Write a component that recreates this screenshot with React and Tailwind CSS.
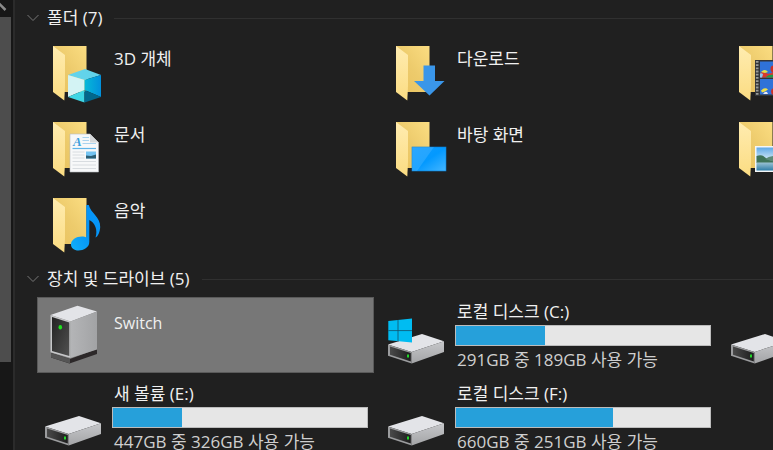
const folders = [
  { name: '3D 개체', Badge: CubeBadge },
  { name: '다운로드', Badge: DownloadBadge },
  { name: '', Badge: VideoBadge },
  { name: '문서', Badge: DocumentBadge },
  { name: '바탕 화면', Badge: DesktopBadge },
  { name: '', Badge: PictureBadge },
  { name: '음악', Badge: MusicBadge },
];

const drives = [
  { name: 'Switch', device: true, selected: true },
  { name: '로컬 디스크 (C:)', total: 291, free: 189, system: true },
  { name: '' },
  { name: '새 볼륨 (E:)', total: 447, free: 326 },
  { name: '로컬 디스크 (F:)', total: 660, free: 251 },
];

function CubeBadge() {
  return (
    <>
      <path d="M23 35 40 29 56 35 39.500 40z" fill="#62d3ea" />
      <path d="M23 35 39.500 40V50L23 57z" fill="#d3f3f4" />
      <path d="M23 57 39.500 50V62.500z" fill="#3fd6e4" />
      <path d="M39.500 40 56 35V57L39.500 50z" fill="url(#cubeSide)" />
      <path d="M39.500 50 56 57 39.500 62.500z" fill="#02678c" />
    </>
  );
}

function DownloadBadge() {
  return <path d="M35.500 25.500H47V41H56.500L41.500 55.500 26 41H35.500z" fill="#3a96e9" />;
}

function VideoBadge() {
  return (
    <>
      <rect x="24" y="20" width="36" height="36" fill="#333538" />
      <path d="M26.200 21V55" stroke="#9a9c98" strokeWidth="2.600" strokeDasharray="1.800 1.400" />
      <rect x="29" y="21.500" width="30" height="16" fill="#2f72d8" />
      <rect x="29" y="39" width="30" height="15.500" fill="#2f72d8" />
      <path d="M29 33q3-2 6 0t7-1v5.500H29z" fill="#d8392e" />
      <path d="M30 32q4-4 7 0l-3 1z" fill="#e8dd4a" />
      <path d="M29 33.500q2-1 3 1l-1 3h-2z" fill="#8ec8f0" />
      <circle cx="43" cy="29" r="3.500" fill="#cf3024" />
      <path d="M35 37q3-3 8-2v2.500h-8z" fill="#1f9b46" />
      <path d="M30 50.500q4-4 7-1l-3 2-3 1z" fill="#efe04b" />
      <path d="M32 54q2-3 4-2l1 2z" fill="#e8e9f2" />
      <circle cx="43.500" cy="51.500" r="3.500" fill="#cf3024" />
    </>
  );
}

function DocumentBadge() {
  return (
    <>
      <path d="M25 18H45L53.500 26.500V56H25z" fill="#f7f8f9" stroke="#b9bcbf" strokeWidth="0.600" />
      <path d="M45 18V26.500H53.500z" fill="#d5d8da" />
      <text x="28" y="30" fontFamily="Liberation Serif, serif" fontStyle="italic" fontWeight="700" fontSize="13" fill="#3d9fdb">A</text>
      <path d="M37.500 21.500H44M37.500 24.500H44M37.500 27.500H51" stroke="#a9d3ee" />
      <path d="M27.500 32.500H51" stroke="#5fb4e8" strokeWidth="1.200" />
      <path d="M27.500 36H39.500M27.500 39H39.500M27.500 42H39.500M27.500 45.500H51M27.500 49H51M27.500 52.500H51" stroke="#d8dce0" />
      <rect x="41" y="35.500" width="10" height="7" fill="#74c4f2" />
      <path d="M41 39.500 46 40 51 38.500V42.500H41z" fill="#2c5e74" />
    </>
  );
}

function DesktopBadge() {
  return (
    <>
      <rect x="24" y="31" width="34" height="24" fill="url(#desktop)" stroke="#0a7fd4" strokeWidth="0.600" />
      <path d="M24 31H46L29 55H24z" fill="#fff" fillOpacity="0.120" />
    </>
  );
}

function PictureBadge() {
  return (
    <>
      <rect x="24" y="30" width="36" height="26" fill="#f4f6f7" />
      <rect x="25.500" y="31.500" width="33" height="23" fill="url(#sky)" />
      <path d="M25.500 40q5-2 8 1t9 4v2H25.500z" fill="#3f7358" />
      <path d="M34 43q4-3 10-3v6z" fill="#5c8a78" />
      <path d="M25.500 46.500H58.500V54.500H25.500z" fill="url(#lake)" />
    </>
  );
}

function MusicBadge() {
  return (
    <path
      d="M41.300 13H43.800C45.500 21 55.500 25 55.200 35 55 40 53 44.500 50.500 45.500 53 38 50 30.500 44.300 28V50C44.300 55.500 38.500 58.500 33.500 58.500 29 58.500 26 56 26 52.500 26 48 31 44.500 37 44.500 38.700 44.500 40.300 44.900 41.300 45.500z"
      fill="url(#note)"
    />
  );
}

function FolderIcon({ Badge }) {
  return (
    <svg viewBox="0 0 64 64" className="size-16 shrink-0" aria-hidden="true">
      <path d="M8 6H41.500V52H8z" fill="url(#folderBack)" />
      <path d="M8 6 20 15V46L19.300 60.500 8 52z" fill="url(#folderFront)" />
      <Badge />
    </svg>
  );
}

function DeviceIcon() {
  return (
    <svg viewBox="0 0 64 64" className="size-16 shrink-0" aria-hidden="true">
      <path d="M6 50 25 56 52 46V51L24.500 60.500 6 54.500z" fill="#2c2829" />
      <path d="M6 50 25 56V60.500L6 54.500z" fill="#555" />
      <path d="M5.500 12 32.500 2.700 52 8.500 25.500 18.500z" fill="#e3e4e8" />
      <path d="M25.500 18.500 52 8.500V46.500L25.500 55z" fill="url(#deviceSide)" />
      <path d="M5.500 12 25.500 18.500V55L5.500 49.300z" fill="#c6c7c9" />
      <path d="M7 14 24.300 19.600V53L7 48z" fill="url(#deviceFront)" />
      <ellipse cx="15.300" cy="24.300" rx="1.800" ry="2.300" fill="#1ee31e" />
    </svg>
  );
}

function DriveIcon({ system }) {
  return (
    <svg viewBox="0 0 64 64" className="size-16 shrink-0" aria-hidden="true">
      <path d="M0 41.500 34 31 56 38.300 23.700 49z" fill="#e3e4e8" />
      <path d="M23.700 49 56 38.300V49L23.700 60.500z" fill="url(#driveSide)" />
      <path d="M0 41.500 23.700 49V60.500L0 52.700z" fill="#9b9c9e" />
      <path d="M2 43.500 22.800 50V58.500L2 51.700z" fill="url(#driveFront)" />
      <rect x="19" y="51.500" width="2" height="3" fill="#22d52a" />
      {system && (
        <>
          <path d="M0.300 18 24 15.500V39.500L0.300 37.300z" fill="#00bcf2" />
          <path d="M10 17V38.500M0.300 27.600H24" stroke="#12506b" strokeWidth="0.800" />
        </>
      )}
    </svg>
  );
}

// Gradients used by all of the icons
function IconDefs() {
  return (
    <svg className="absolute size-0" aria-hidden="true">
      <defs>
        <linearGradient id="folderBack" x1="0" y1="1" x2="1" y2="0">
          <stop offset="0" stopColor="#e9c25f" />
          <stop offset="0.500" stopColor="#edcb6c" />
          <stop offset="1" stopColor="#fbdd82" />
        </linearGradient>
        <linearGradient id="folderFront" x1="0" y1="0" x2="0" y2="1">
          <stop offset="0" stopColor="#ffecb0" />
          <stop offset="1" stopColor="#fbdc82" />
        </linearGradient>
        <linearGradient id="cubeSide">
          <stop offset="0" stopColor="#06b9d8" />
          <stop offset="1" stopColor="#0290dc" />
        </linearGradient>
        <linearGradient id="desktop" x1="0" y1="0" x2="1" y2="1">
          <stop offset="0" stopColor="#0f9bff" />
          <stop offset="0.500" stopColor="#0399ff" />
          <stop offset="1" stopColor="#45b6ff" />
        </linearGradient>
        <linearGradient id="sky" x1="0" y1="0" x2="0" y2="1">
          <stop offset="0" stopColor="#5fa9e6" />
          <stop offset="0.600" stopColor="#e3f1f9" />
        </linearGradient>
        <linearGradient id="lake" x1="0" y1="0" x2="0" y2="1">
          <stop offset="0" stopColor="#9cc3d4" />
          <stop offset="1" stopColor="#2f7da6" />
        </linearGradient>
        <linearGradient id="note" x1="0" y1="1" x2="1" y2="0">
          <stop offset="0" stopColor="#12b0fb" />
          <stop offset="0.500" stopColor="#0393f5" />
          <stop offset="1" stopColor="#0a98fb" />
        </linearGradient>
        <linearGradient id="deviceSide">
          <stop offset="0" stopColor="#b4b5b7" />
          <stop offset="1" stopColor="#a2a3a5" />
        </linearGradient>
        <linearGradient id="deviceFront" x1="0" y1="0" x2="1" y2="1">
          <stop offset="0" stopColor="#232323" />
          <stop offset="1" stopColor="#515151" />
        </linearGradient>
        <linearGradient id="driveSide" x1="0" y1="0" x2="0" y2="1">
          <stop offset="0" stopColor="#c6c7ca" />
          <stop offset="1" stopColor="#a3a4a6" />
        </linearGradient>
        <linearGradient id="driveFront">
          <stop offset="0" stopColor="#4a4a4a" />
          <stop offset="1" stopColor="#1d1d1d" />
        </linearGradient>
      </defs>
    </svg>
  );
}

function GroupHeader({ title, count, className }) {
  return (
    <div className={`flex items-center gap-3 pl-3 ${className}`}>
      <button type="button" className="flex shrink-0 items-center gap-2">
        <svg viewBox="0 0 12 8" className="h-2 w-3" fill="none" stroke="#777" aria-hidden="true">
          <path d="M0.500 1 6 6.500 11.500 1" />
        </svg>
        {title} ({count})
      </button>
      <div className="h-px flex-1 bg-[#303030]" />
    </div>
  );
}

function FolderTile({ folder }) {
  return (
    <li className="flex h-19 gap-[5px] px-2 pt-1">
      <FolderIcon Badge={folder.Badge} />
      <span className="pt-[9px]">{folder.name}</span>
    </li>
  );
}

function DriveTile({ drive }) {
  const used = drive.total ? ((drive.total - drive.free) / drive.total) * 100 : 0;

  return (
    <li className={`flex h-19 gap-[3px] pl-2 ${drive.selected ? 'bg-[#777] outline outline-[#5a5a5a] -outline-offset-1' : ''}`}>
      <div className="pt-1.5">
        {drive.device ? <DeviceIcon /> : <DriveIcon system={drive.system} />}
      </div>
      {drive.total ? (
        <div className="flex-1 pt-[5px] pr-1.5">
          <p className="pl-0.5">{drive.name}</p>
          <div
            role="meter"
            aria-label={drive.name}
            aria-valuemin={0}
            aria-valuemax={drive.total}
            aria-valuenow={drive.total - drive.free}
            className="mt-[3px] h-[21px] border border-[#bcbcbc] bg-[#e6e6e6]"
          >
            <div className="h-full bg-[#26a0da]" style={{ width: `${used}%` }} />
          </div>
          <p className="pt-1 pl-0.5 text-[#cfcfcf]">
            {drive.total}GB 중 {drive.free}GB 사용 가능
          </p>
        </div>
      ) : (
        <span className="pt-4 pl-0.5 text-base leading-5">{drive.name}</span>
      )}
    </li>
  );
}

function App() {
  return (
    <div className="flex h-screen overflow-hidden bg-[#202020] font-['Open_Sans','Noto_Sans_CJK_KR',sans-serif] text-[17px] leading-5 text-[#f0f0f0]">
      <IconDefs />
      <div className="flex w-3.25 shrink-0 flex-col bg-[#171717] pr-0.5">
        <svg viewBox="0 0 11 17" className="h-4.25 w-full" fill="none" stroke="#8a8a8a" strokeWidth="2.500" aria-hidden="true">
          <path d="M-6 9.500 -0.500 4 5.500 10" />
        </svg>
        <div className="h-[345px] bg-[#4d4d4d]" />
      </div>
      <main className="min-w-0 flex-1 overflow-hidden border-l-2 border-[#2b2b2b]">
        <GroupHeader title="폴더" count={7} className="h-9" />
        <ul className="grid grid-cols-[repeat(3,337px)] gap-x-1.5 pl-5.5">
          {folders.map((folder, i) => (
            <FolderTile key={i} folder={folder} />
          ))}
        </ul>
        <GroupHeader title="장치 및 드라이브" count={5} className="h-7.5" />
        <ul className="grid grid-cols-[repeat(3,337px)] gap-1.5 pt-[3px] pl-5.5">
          {drives.map((drive, i) => (
            <DriveTile key={i} drive={drive} />
          ))}
        </ul>
      </main>
    </div>
  );
}

export default App;
